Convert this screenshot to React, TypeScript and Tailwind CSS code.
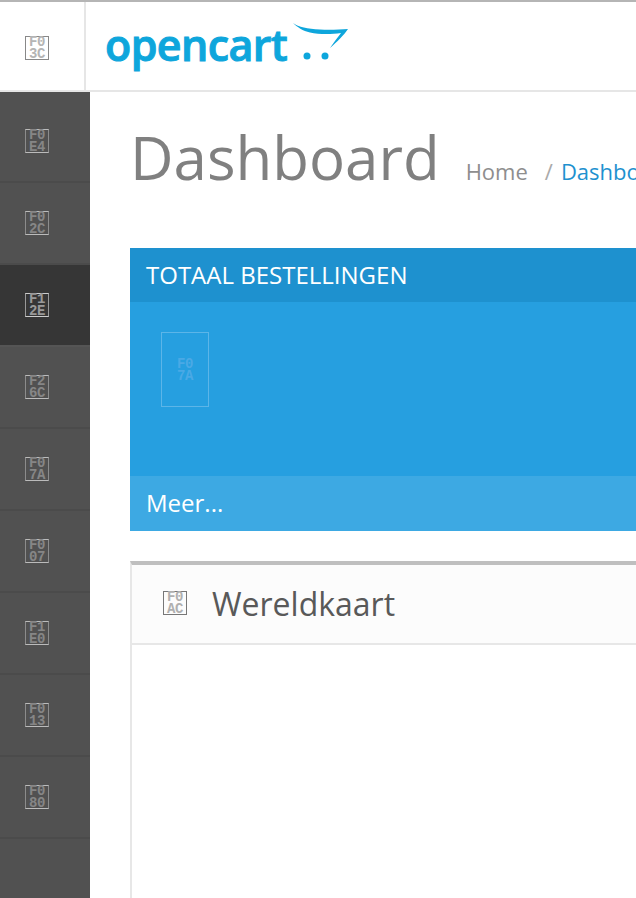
const OPEN_SANS = "font-['Open_Sans',sans-serif]";

const NAV_ICONS = ["F0E4", "F02C", "F12E", "F26C", "F07A", "F007", "F1E0", "F013", "F080"];

function Tofu({ code, className }: { code: string; className: string }) {
  return (
    <span className={`flex size-6 items-center justify-center border pt-[1px] ${className}`}>
      <span className="block w-4 font-['Liberation_Mono',monospace] text-[14px] leading-[11.5px] font-bold tracking-[-0.4px] break-all">
        {code}
      </span>
    </span>
  );
}

function CartMark() {
  return (
    <svg width="56" height="38" viewBox="0 0 56 38" className="mt-[-8px] ml-[6px]" fill="#0ea6dc">
      <path d="M0 0C6 4 14 6 27 6.500C37 7 47 6.500 55 6C51 12 44 19 37 25C41 19 45 14 48 10C38 11.500 26 11.500 17 9.500C10 8 4 4 0 0Z" />
      <circle cx="14" cy="33" r="3.500" />
      <circle cx="32" cy="33" r="3.500" />
    </svg>
  );
}

function Header() {
  return (
    <header className="flex h-[92px] shrink-0 border-t-2 border-b-2 border-t-[#b5b5b5] border-b-[#e6e6e6] bg-white">
      <div className="flex w-[86px] shrink-0 items-center border-r-2 border-[#e6e6e6] pt-1 pl-[25px]">
        <Tofu code="F03C" className="border-[#888] text-[#b5b5b5]" />
      </div>
      <div className="ml-[19px] flex items-center">
        <span className="mt-[-3px] font-['Open_Sans',sans-serif] text-[43px] leading-none font-semibold tracking-[-0.6px] text-[#0ea6dc] [-webkit-text-stroke:1px_#0ea6dc]">
          opencart
        </span>
        <CartMark />
      </div>
    </header>
  );
}

function Sidebar() {
  return (
    <nav className="w-[90px] shrink-0 bg-[#515151] pt-[9px]">
      {NAV_ICONS.map((code, i) => (
        <div
          key={code}
          className={`h-[82px] border-b-2 pt-[28px] pl-[25px] ${
            i === 2 ? "border-[#555555] bg-[#363636]" : "border-[#4b4b4b]"
          }`}
        >
          <Tofu
            code={code}
            className={
              i === 2
                ? "border-x-[#999] border-y-[#ccc] text-[#999]"
                : "border-x-[#8c8c8c] border-y-[#bbb] text-[#868686]"
            }
          />
        </div>
      ))}
    </nav>
  );
}

function OrdersTile() {
  return (
    <section className="w-[600px] text-white">
      <h2 className="flex h-[54px] items-center bg-[#1e91cf] pl-4 text-[24px] uppercase">Totaal bestellingen</h2>
      <div className="h-[174px] bg-[#269fe0] pt-[30px] pl-[31px]">
        <div className="flex h-[75px] w-12 items-center justify-center border border-[#5cb5e8] pt-[2px]">
          <span className="block w-4 font-['Liberation_Mono',monospace] text-[14px] leading-[11.5px] font-bold tracking-[-0.4px] break-all text-[#4aa9e5]">
            F07A
          </span>
        </div>
      </div>
      <div className="flex h-[55px] items-center bg-[#3da9e3] pb-[1px] pl-4 text-[24px]">Meer...</div>
    </section>
  );
}

function MapPanel() {
  return (
    <section className="mt-[30px] w-[600px] flex-1 border-t-4 border-l-2 border-t-[#bfbfbf] border-l-[#e7e7e7]">
      <div className="flex h-[80px] items-center border-b-2 border-[#e7e7e7] bg-[#fcfcfc] pl-[31px]">
        <Tofu code="F0AC" className="mt-[-2px] border-[#777] text-[#b0b0b0]" />
        <h3 className="ml-[25px] text-[32px] text-[#595959]">Wereldkaart</h3>
      </div>
    </section>
  );
}

export default function App() {
  return (
    <div className={`flex h-[898px] w-[636px] flex-col overflow-hidden bg-white ${OPEN_SANS}`}>
      <Header />
      <div className="flex min-h-0 flex-1">
        <Sidebar />
        <main className="flex min-w-0 flex-1 flex-col pl-10">
          <div className="flex h-[156px] shrink-0 items-baseline whitespace-nowrap pt-[25px]">
            <h1 className="text-[60px] leading-[80px] text-[#808080]">Dashboard</h1>
            <ol className="ml-[26px] flex text-[22px] text-[#8e8e8e]">
              <li>Home</li>
              <li className="mr-[8px] ml-[17px] text-[#aaaaaa]">/</li>
              <li className="text-[#1e91cf]">Dashboard</li>
            </ol>
          </div>
          <OrdersTile />
          <MapPanel />
        </main>
      </div>
    </div>
  );
}
